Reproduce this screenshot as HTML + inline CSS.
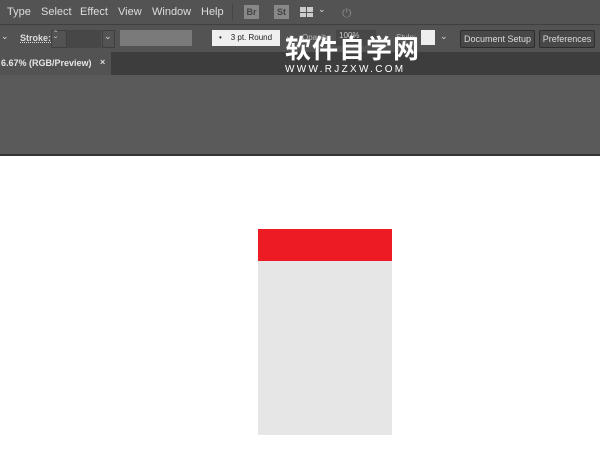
<html><head><style>
body{margin:0;width:600px;height:452px;background:#fff;font-family:"Liberation Sans",sans-serif;position:relative;overflow:hidden}
div{position:absolute;box-sizing:border-box}
.t{color:#ddd;font-size:11px;white-space:nowrap}
.btn{border:1px solid #2e2e2e;background:#484848;color:#ddd;font-size:9px;text-align:center;line-height:16px;border-radius:2px}
.ch{color:#ccc;font-size:10px;line-height:10px}
</style></head><body>
<div style="left:0;top:0;width:600px;height:25px;background:#535353;border-bottom:1px solid #3f3f3f"></div>
<div class="t" style="left:7px;top:6px">Type</div>
<div class="t" style="left:41px;top:6px">Select</div>
<div class="t" style="left:80px;top:6px">Effect</div>
<div class="t" style="left:118px;top:6px">View</div>
<div class="t" style="left:152px;top:6px">Window</div>
<div class="t" style="left:201px;top:6px">Help</div>
<div style="left:232px;top:4px;width:1px;height:17px;background:#444"></div>
<div style="left:244px;top:5px;width:15px;height:14px;background:#888;color:#444;font-size:9px;text-align:center;line-height:14px;font-weight:bold">Br</div>
<div style="left:274px;top:5px;width:15px;height:14px;background:#888;color:#444;font-size:9px;text-align:center;line-height:14px;font-weight:bold">St</div>
<div style="left:300px;top:7px;width:6px;height:5px;background:#ccc"></div><div style="left:307px;top:7px;width:6px;height:5px;background:#ccc"></div>
<div style="left:300px;top:13px;width:6px;height:4px;background:#ccc"></div><div style="left:307px;top:13px;width:6px;height:4px;background:#ccc"></div>
<div class="t" style="left:318px;top:4px;font-size:9px">&#8964;</div>
<div style="left:342px;top:6px;width:14px;height:12px;color:#888;font-size:12px">⏻</div>
<div style="left:0;top:25px;width:600px;height:27px;background:#535353"></div>
<div class="t" style="left:1px;top:31px;font-size:9px">&#8964;</div>
<div class="t" style="left:20px;top:33px;font-size:9px;font-weight:bold;text-decoration:underline dotted">Stroke:</div>
<div style="left:51px;top:30px;width:16px;height:18px;border:1px solid #3f3f3f"></div>
<div class="ch" style="left:54px;top:31px">&#710;</div><div class="ch" style="left:54px;top:37px">&#711;</div>
<div style="left:67px;top:30px;width:34px;height:18px;background:#474747"></div>
<div style="left:102px;top:30px;width:13px;height:18px;border:1px solid #3f3f3f"></div>
<div class="t" style="left:104px;top:31px;font-size:9px">&#8964;</div>
<div style="left:120px;top:30px;width:72px;height:16px;background:#7a7a7a"></div>
<div style="left:212px;top:30px;width:68px;height:16px;background:#efefef;color:#222;font-size:8px;line-height:16px;padding-left:7px">•&nbsp;&nbsp;&nbsp;&nbsp;3 pt. Round</div>
<div class="t" style="left:285px;top:31px;font-size:9px">&#8964;</div>
<div class="t" style="left:302px;top:33px;font-size:8px;color:#bbb">Opacity:</div>
<div style="left:336px;top:30px;width:40px;height:16px;background:#474747;color:#ccc;font-size:8px;padding-left:3px;line-height:12px">100%</div>
<div class="t" style="left:396px;top:33px;font-size:8px;color:#bbb">Style:</div>
<div style="left:421px;top:30px;width:14px;height:15px;background:#eee"></div>
<div class="t" style="left:440px;top:31px;font-size:9px">&#8964;</div>
<div class="btn" style="left:460px;top:30px;width:75px;height:18px">Document Setup</div>
<div class="btn" style="left:539px;top:30px;width:56px;height:18px">Preferences</div>
<div style="left:0;top:52px;width:600px;height:23px;background:#3d3d3d"></div>
<div style="left:0;top:52px;width:111px;height:23px;background:#535353"></div>
<div class="t" style="left:1px;top:58px;font-size:9px;font-weight:bold;color:#e6e6e6">6.67% (RGB/Preview)</div>
<div class="t" style="left:100px;top:57px;font-size:9px;font-weight:bold">×</div>
<div style="left:0;top:75px;width:600px;height:81px;background:#5a5a5a;border-bottom:2px solid #333"></div>
<div style="left:285px;top:33px;color:#fff;font-size:26px;font-family:'Noto Sans CJK SC',sans-serif;font-weight:bold;letter-spacing:1px;line-height:30px">软件自学网</div>
<div style="left:285px;top:64px;color:#fff;font-size:10px;letter-spacing:2.3px">WWW.RJZXW.COM</div>
<div style="left:258px;top:229px;width:134px;height:206px;background:#e6e6e6"></div>
<div style="left:258px;top:229px;width:134px;height:32px;background:#ed1c24"></div>
</body></html>
